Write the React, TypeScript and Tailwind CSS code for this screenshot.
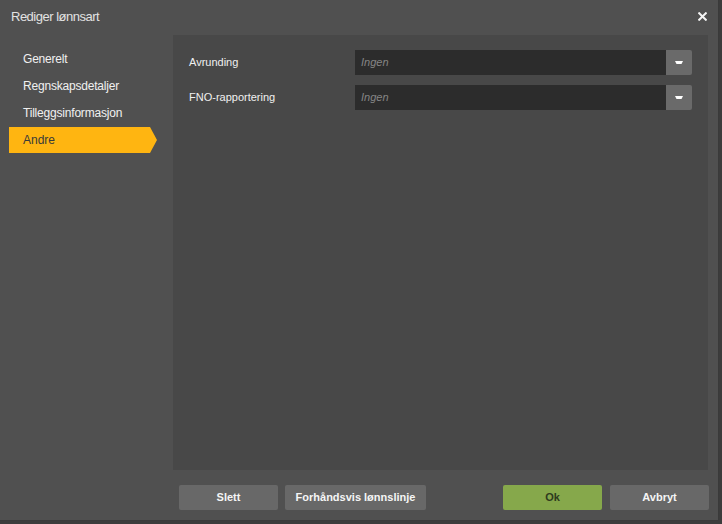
import React from "react";

const font = { fontFamily: '"Liberation Sans", Arial, sans-serif' };

function Select() {
  return (
    <div className="flex h-[25px] w-[337px] shrink-0">
      <div className="flex flex-1 items-center bg-[#2c2c2c] pl-[6px] text-[11px] italic text-[#858585]">Ingen</div>
      <div className="flex w-[26px] items-center justify-center rounded-r-[2px] bg-[#6a6a6a]">
        <svg width="8" height="4" viewBox="0 0 8 4">
          <path d="M0 0 H8 L6.5 3 H1.5 Z" fill="#ffffff" />
        </svg>
      </div>
    </div>
  );
}

export default function App() {
  const items = ["Generelt", "Regnskapsdetaljer", "Tilleggsinformasjon"];
  return (
    <div className="h-[524px] w-[722px] bg-[#3c3c3c]" style={font}>
      <div className="flex h-[521px] w-[719px] flex-col border-r border-b border-[#3a3a3a] bg-[#505050]">
        <div className="flex h-[35px] items-start justify-between">
          <div className="pl-[11px] pt-[7px] text-[13px] tracking-[-0.5px] text-[#e2e2e2]">Rediger lønnsart</div>
          <div className="pr-[11px] pt-[12px]">
            <svg width="9" height="9" viewBox="0 0 9 9">
              <path d="M1.2 1.2 L7.8 7.8 M7.8 1.2 L1.2 7.8" stroke="#f4f4f4" strokeWidth="2" strokeLinecap="square" />
            </svg>
          </div>
        </div>
        <div className="flex h-[435px]">
          <div className="w-[173px] shrink-0 pt-[10px] pl-[9px]">
            {items.map((t) => (
              <div key={t} className="flex h-[27px] items-center pl-[14px] text-[12px] tracking-[-0.2px] text-[#f0f0f0]">
                {t}
              </div>
            ))}
            <div className="relative mt-[1px] flex h-[26px] w-[141px] items-center bg-[#ffb511] pl-[14px] text-[12px] text-[#3a3a3a]">
              Andre
              <div className="absolute right-[-7px] top-0 h-0 w-0 border-y-[13px] border-l-[7px] border-y-transparent border-l-[#ffb511]" />
            </div>
          </div>
          <div className="mr-[11px] flex-1 bg-[#484848] pt-[15px] pl-[16px] pr-[16px]">
            <div className="flex flex-col gap-[10px]">
              <div className="flex items-center">
                <div className="w-[166px] shrink-0 text-[11px] text-[#f0f0f0]">Avrunding</div>
                <Select />
              </div>
              <div className="flex items-center">
                <div className="w-[166px] shrink-0 text-[11px] text-[#f0f0f0]">FNO-rapportering</div>
                <Select />
              </div>
            </div>
          </div>
        </div>
        <div className="flex pt-[15px] pl-[179px] pr-[9px]">
          <div className="flex gap-[7px]">
            <button className="h-[25px] w-[99px] rounded-[2px] bg-[#686868] text-[11px] font-bold text-[#f5f5f5]">Slett</button>
            <button className="h-[25px] w-[141px] rounded-[2px] bg-[#686868] text-[11px] font-bold text-[#f5f5f5]">Forhåndsvis lønnslinje</button>
          </div>
          <div className="ml-auto flex gap-[8px]">
            <button className="h-[25px] w-[99px] rounded-[2px] bg-[#86a84b] text-[11px] font-bold text-[#2e3a1e]">Ok</button>
            <button className="h-[25px] w-[99px] rounded-[2px] bg-[#686868] text-[11px] font-bold text-[#f5f5f5]">Avbryt</button>
          </div>
        </div>
      </div>
    </div>
  );
}
